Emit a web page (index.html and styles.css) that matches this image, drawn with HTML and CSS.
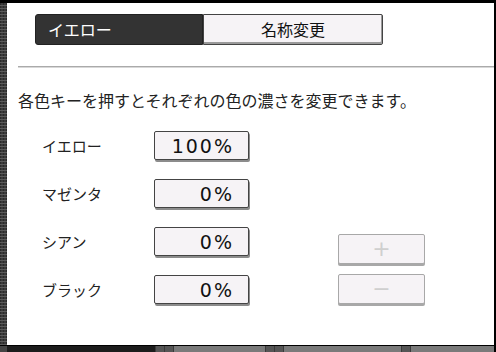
FILE: index.html
```html
<!DOCTYPE html>
<html lang="ja">
<head>
  <meta charset="UTF-8">
  <meta name="viewport" content="width=device-width, initial-scale=1.0">
  <title>カラー調整</title>
  <link rel="stylesheet" href="styles.css">
</head>
<body>

  <div class="screen">
    <div class="screen__strip"></div>

    <div class="panel">
      <div class="tabs">
        <button type="button" class="tabs__item tabs__item--active">イエロー</button>
        <button type="button" class="tabs__item">名称変更</button>
      </div>

      <hr class="panel__rule">

      <p class="panel__note">各色キーを押すとそれぞれの色の濃さを変更できます。</p>

      <div class="colorGrid">
        <span class="colorGrid__label">イエロー</span>
        <button type="button" class="valueBtn">100%</button>

        <span class="colorGrid__label">マゼンタ</span>
        <button type="button" class="valueBtn">0%</button>

        <span class="colorGrid__label">シアン</span>
        <button type="button" class="valueBtn">0%</button>
        <div class="adjust">
          <button type="button" class="adjust__btn" disabled>+</button>
          <button type="button" class="adjust__btn" disabled>&minus;</button>
        </div>

        <span class="colorGrid__label">ブラック</span>
        <button type="button" class="valueBtn">0%</button>
      </div>
    </div>

    <div class="screen__edge"></div>
  </div>

  <div class="statusBar">
    <span class="statusBar__strip"></span>
    <span class="statusBar__dark"></span>
    <span class="statusBar__seg statusBar__seg--s"></span>
    <span class="statusBar__seg statusBar__seg--s"></span>
    <span class="statusBar__seg statusBar__seg--m"></span>
    <span class="statusBar__seg statusBar__seg--s"></span>
    <span class="statusBar__seg statusBar__seg--s"></span>
    <span class="statusBar__seg statusBar__seg--l"></span>
    <span class="statusBar__seg statusBar__seg--s"></span>
    <span class="statusBar__seg statusBar__seg--r"></span>
  </div>

</body>
</html>
```

FILE: styles.css
```css
* {
  box-sizing: border-box;
  padding: 0;
  margin: 0;
}
body {
  width: 496px;
  height: 352px;
  overflow: hidden;
  background-color: #000;
  font-family: "Noto Sans CJK JP", "DejaVu Sans", sans-serif;
  color: #111;
  padding-top: 3px;
}
button {
  font-family: inherit;
  color: inherit;
  outline: none;
}
.screen {
  display: flex;
  height: 342px;
}
.screen__strip {
  width: 7px;
  background-color: #3a3a3a;
  background-image: repeating-linear-gradient(0deg, #5a5a5a 0 1px, transparent 1px 3px),
    repeating-linear-gradient(90deg, #2a2a2a 0 1px, transparent 1px 3px);
}
.screen__edge {
  width: 2px;
}
.panel {
  flex-grow: 1;
  background-color: #fff;
  padding: 11px 0 0 11px;
}
.tabs {
  display: flex;
  margin-left: 17px;
  height: 31px;
}
.tabs__item {
  width: 180px;
  height: 31px;
  font-size: 16px;
  border: 1px solid #444;
  border-radius: 0 2px 2px 0;
  background-color: #f6f3f6;
  box-shadow: inset -1px -2px 0 #9a9a9a;
  text-align: center;
  padding-bottom: 2px;
}
.tabs__item--active {
  width: 168px;
  background-color: #333;
  border-color: #222;
  border-radius: 3px 0 0 3px;
  box-shadow: none;
  color: #fff;
  text-align: left;
  padding-left: 12px;
}
.panel__rule {
  border: none;
  height: 2px;
  margin-top: 21px;
  background: linear-gradient(#aaa 0 1px, #d8d8d8 1px 2px);
}
.panel__note {
  margin-top: 22px;
  font-size: 16px;
  line-height: 20px;
  color: #222;
}
.colorGrid {
  display: grid;
  grid-template-columns: 112px 95px 87px;
  grid-template-rows: repeat(4, 29px);
  row-gap: 19px;
  margin-top: 21px;
  margin-left: 24px;
  align-items: center;
}
.colorGrid__label {
  grid-column: 1;
  font-size: 15px;
  line-height: 20px;
  color: #222;
}
.valueBtn {
  grid-column: 2;
  height: 29px;
  font-family: "DejaVu Sans", sans-serif;
  font-size: 19px;
  letter-spacing: 2px;
  text-align: right;
  padding-right: 14px;
  background-color: #f6f3f6;
  border: 1px solid #444;
  border-radius: 2px;
  box-shadow: 1px 2px 0 #8c8c8c;
}
.adjust {
  grid-column: 3;
  grid-row: 3 / span 2;
  align-self: end;
  margin-left: 89px;
  display: flex;
  flex-direction: column;
  gap: 10px;
}
.adjust__btn {
  width: 87px;
  height: 30px;
  font-family: "DejaVu Sans", sans-serif;
  font-size: 22px;
  line-height: 1;
  color: #cfcfcf;
  background-color: #f6f3f6;
  border: 1px solid #a8a8a8;
  border-radius: 2px;
  box-shadow: 0 2px 0 #a8a8a8;
}
.statusBar {
  display: flex;
  height: 7px;
  border-top: 1px solid #000;
}
.statusBar__strip {
  width: 7px;
  background-color: #444;
}
.statusBar__dark {
  width: 148px;
  background-color: #1c1c1c;
}
.statusBar__seg {
  background-color: #7a7a7a;
  border-left: 1px solid #3a3a3a;
}
.statusBar__seg--s {
  width: 9px;
  background-color: #555;
}
.statusBar__seg--m {
  width: 92px;
}
.statusBar__seg--l {
  width: 118px;
}
.statusBar__seg--r {
  flex-grow: 1;
  margin-right: 2px;
}
```
